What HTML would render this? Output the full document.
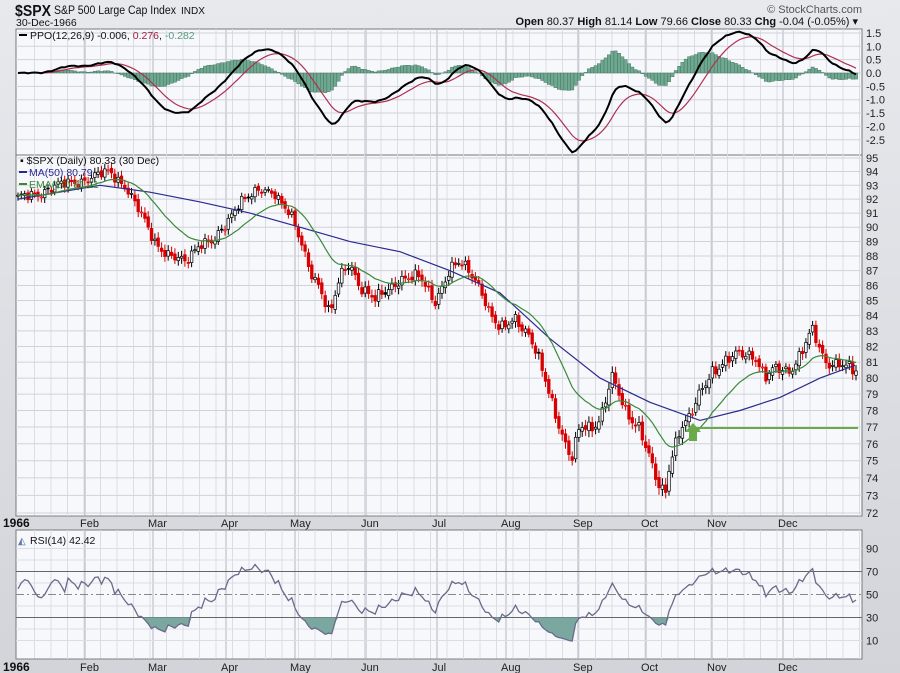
<!DOCTYPE html>
<html><head><meta charset="utf-8"><style>
html,body{margin:0;padding:0;background:#dcdde2;}
svg{display:block;font-family:"Liberation Sans",sans-serif;}
</style></head><body>
<svg id="s" width="900" height="673" xmlns="http://www.w3.org/2000/svg">
<defs><linearGradient id="bg" x1="0" y1="0" x2="0" y2="1"><stop offset="0" stop-color="#e8e9ed"/><stop offset="1" stop-color="#d3d4da"/></linearGradient></defs>
<rect width="900" height="673" fill="url(#bg)"/>
<text x="15" y="16" font-size="16" font-weight="bold" fill="#111" textLength="36" lengthAdjust="spacingAndGlyphs">$SPX</text>
<text x="54" y="14" font-size="11.5" fill="#111" textLength="122" lengthAdjust="spacingAndGlyphs">S&amp;P 500 Large Cap Index</text>
<text x="181" y="14" font-size="10" fill="#111">INDX</text>
<text x="16" y="26" font-size="10.5" fill="#111">30-Dec-1966</text>
<text x="862" y="13" font-size="11" fill="#555" text-anchor="end">© StockCharts.com</text>
<text x="858" y="25" font-size="11" fill="#111" text-anchor="end"><tspan font-weight="bold">Open</tspan> 80.37  <tspan font-weight="bold">High</tspan> 81.14  <tspan font-weight="bold">Low</tspan> 79.66  <tspan font-weight="bold">Close</tspan> 80.33  <tspan font-weight="bold">Chg</tspan> -0.04 (-0.05%) ▾</text>
<g id="g"></g>
</svg>
<script>
var S=document.getElementById('g'),h='';
function L(x1,y1,x2,y2,c,w,extra){h+='<line x1="'+x1+'" y1="'+y1+'" x2="'+x2+'" y2="'+y2+'" stroke="'+c+'" stroke-width="'+(w||1)+'" '+(extra||'')+'/>';}
function T(x,y,t,sz,c,ex){h+='<text x="'+x+'" y="'+y+'" font-size="'+sz+'" fill="'+c+'" '+(ex||'')+'>'+t+'</text>';}
var X0=16,X1=862;
h+='<rect x="16" y="29" width="846" height="126" fill="#f7f8fb" stroke="#777"/>';
h+='<rect x="16" y="155" width="846" height="361" fill="#f7f8fb" stroke="#777"/>';
h+='<rect x="16" y="530" width="846" height="129" fill="#f7f8fb" stroke="#777"/>';
var months=[['Feb',85],['Mar',153],['Apr',226],['May',295],['Jun',366],['Jul',437],['Aug',506],['Sep',578],['Oct',646],['Nov',712],['Dec',783]];
var panels=[[29,155],[155,516],[530,659]];
panels.forEach(function(p){
 for(var x=18+16.5;x<X1;x+=16.5)L(x.toFixed(1),p[0],x.toFixed(1),p[1],'#dcdde4');
 months.forEach(function(m){L(m[1],p[0],m[1],p[1],'#b4b6c0');});
});
function py(v){return 73-v*26.7;}
for(var v=-2.5;v<=1.5;v+=0.5){L(X0,py(v),X1,py(v),'#d0d2da');T(866,py(v)+4,(v<0?'-':'')+Math.abs(v).toFixed(1),11,'#222');}
var A=5989.7,B=1280.6;function yy(p){return A-B*Math.log(p);}
for(var p=72;p<=95;p++){L(X0,yy(p),X1,yy(p),'#d0d2da');T(866,yy(p)+4,p,11,'#222');}
function ry(v){return 652-v*1.15;}
for(var v=10;v<=90;v+=10){if(v!=30&&v!=70&&v!=50)L(X0,ry(v),X1,ry(v),'#dcdde4');}
L(X0,ry(70),X1,ry(70),'#666');L(X0,ry(30),X1,ry(30),'#666');L(X0,ry(50),X1,ry(50),'#888',1,'stroke-dasharray="8,3,2,3"');
[90,70,50,30,10].forEach(function(v){T(866,ry(v)+4,v,11,'#222');});
[[527],[671]].forEach(function(a){T(3,a[0],'1966',12,'#111','font-weight="bold"');months.forEach(function(m){T(m[1]-5,a[0],m[0],11,'#222');});});
L(16,516,862,516,'#888',1,'stroke-dasharray="1,1"');L(16,659,862,659,'#888',1,'stroke-dasharray="1,1"');
var K=[[18,92],[40,92.5],[60,93],[90,93.5],[110,94],[125,93],[140,91],[155,89],[170,88],[185,87.5],[200,89],[215,89],[225,90],[240,92],[260,92.5],[275,92.5],[290,91],[300,89],[310,87],[320,86],[330,84],[340,86.5],[350,87.5],[360,86],[375,85],[385,85.5],[400,86.5],[420,86.5],[435,85],[450,87],[460,87.5],[470,87],[480,86],[490,84],[500,83],[515,84],[530,82.5],[545,80],[555,78],[565,76],[572,75],[580,77],[590,77],[600,77.5],[612,80],[625,78],[640,77],[650,75],[658,73.5],[665,73],[670,75],[680,77],[690,77.5],[700,79],[712,80.5],[725,81],[740,81.5],[755,81.5],[765,80],[775,80.5],[790,80.5],[800,81.5],[812,83],[825,81],[840,81],[855,80.3]];
function interp(x){for(var i=1;i<K.length;i++){if(x<=K[i][0]){var a=K[i-1],b=K[i];return a[1]+(b[1]-a[1])*(x-a[0])/(b[0]-a[0]);}}return K[K.length-1][1];}
var N=252,dx=838/(N-1),C=[],xs=[];
for(var i=0;i<N;i++){var x=18+i*dx;xs.push(x);C.push(interp(x)+0.25*Math.sin(i*1.7)+0.18*Math.sin(i*0.53+1)+0.14*Math.sin(i*2.9+2));}
for(var i=0;i<N;i++){var c=C[i],o=i?C[i-1]+0.12*Math.sin(i*2.3):c,hi=Math.max(o,c)+0.2+0.2*Math.abs(Math.sin(i*3.1)),lo=Math.min(o,c)-0.2-0.2*Math.abs(Math.cos(i*2.7));
 var col=(i&&c<C[i-1])?'#d80000':'#000',x=xs[i].toFixed(1);
 L(x,yy(hi).toFixed(1),x,yy(lo).toFixed(1),col);
 var t=yy(Math.max(o,c)),b=yy(Math.min(o,c));
 h+='<rect x="'+(xs[i]-1.3).toFixed(1)+'" y="'+t.toFixed(1)+'" width="2.6" height="'+Math.max(1,b-t).toFixed(1)+'" fill="'+(c<o?col:'#f7f8fb')+'" stroke="'+col+'" stroke-width="0.7"/>';}
function ema(arr,n){var k=2/(n+1),e=arr[0],r=[];for(var i=0;i<arr.length;i++){e=arr[i]*k+e*(1-k);r.push(e);}return r;}
function poly(pts,c,w){h+='<polyline fill="none" stroke="'+c+'" stroke-width="'+w+'" points="'+pts.map(function(p){return p[0].toFixed(1)+','+p[1].toFixed(1)}).join(' ')+'"/>';}
var MK=[[18,92],[100,93],[150,92.5],[200,91.8],[250,91],[300,90],[350,89],[400,88.3],[450,87],[500,85.5],[550,82.5],[600,80],[650,78.5],[700,77.4],[740,78],[780,78.8],[820,80],[855,80.8]];
poly(MK.map(function(p){return [p[0],yy(p[1])]}),'#2a2a90',1.2);
var E20=ema(C,20);poly(xs.map(function(x,i){return [x,yy(E20[i])]}),'#3a8a3a',1.2);
L(690,428,858,428,'#6aaa4a',2);
h+='<polygon points="693,423 701,432 697,432 697,441 689,441 689,432 685,432" fill="#6aaa4a"/>';
T(20,164,'▪ $SPX (Daily) 80.33 (30 Dec)',10.5,'#111');
L(19,172,27,172,'#2a2a90',2);T(29,176,'MA(50) 80.79',10.5,'#2a2a90');
L(19,184,27,184,'#3a8a3a',2);T(29,188,'EMA(20) 81.11',10.5,'#3a8a3a');
var e12=ema(C,12),e26=ema(C,26),P=C.map(function(c,i){return (e12[i]-e26[i])/e26[i]*100;}),Sg=ema(P,9);
for(var i=0;i<N;i++){var hv=P[i]-Sg[i];h+='<rect x="'+(xs[i]-1.6).toFixed(1)+'" y="'+Math.min(py(0),py(hv)).toFixed(1)+'" width="3.3" height="'+Math.abs(py(hv)-py(0)).toFixed(1)+'" fill="#6fa890" stroke="#3d6b58" stroke-width="0.4"/>';}
poly(xs.map(function(x,i){return [x,py(Sg[i])]}),'#b03050',1.2);
poly(xs.map(function(x,i){return [x,py(P[i])]}),'#000',2);
L(19,35,27,35,'#000',2);
T(30,39,'PPO(12,26,9) -0.006, <tspan fill="#a02040">0.276</tspan>, <tspan fill="#5a9a80">-0.282</tspan>',10.5,'#111');
var ag=0,al=0,R=[];for(var i=0;i<N;i++){var d=i?C[i]-C[i-1]:0;var g=d>0?d:0,l=d<0?-d:0;if(i<=14){ag+=g/14;al+=l/14;}else{ag=(ag*13+g)/14;al=(al*13+l)/14;}R.push(i<15?55+8*Math.sin(i*0.7):100-100/(1+ag/(al||1e-6)));}
var pts=xs.map(function(x,i){return [x,ry(Math.min(R[i],30))]});
h+='<polygon fill="#7aa8a0" points="'+xs[0]+','+ry(30)+' '+pts.map(function(p){return p[0].toFixed(1)+','+p[1].toFixed(1)}).join(' ')+' '+xs[N-1]+','+ry(30)+'"/>';
poly(xs.map(function(x,i){return [x,ry(R[i])]}),'#6a6a8a',1.3);
T(30,544,'RSI(14) 42.42',10.5,'#111');T(18,544,'◭',10,'#5a7aa8');
S.innerHTML=h;
</script>
</body></html>
